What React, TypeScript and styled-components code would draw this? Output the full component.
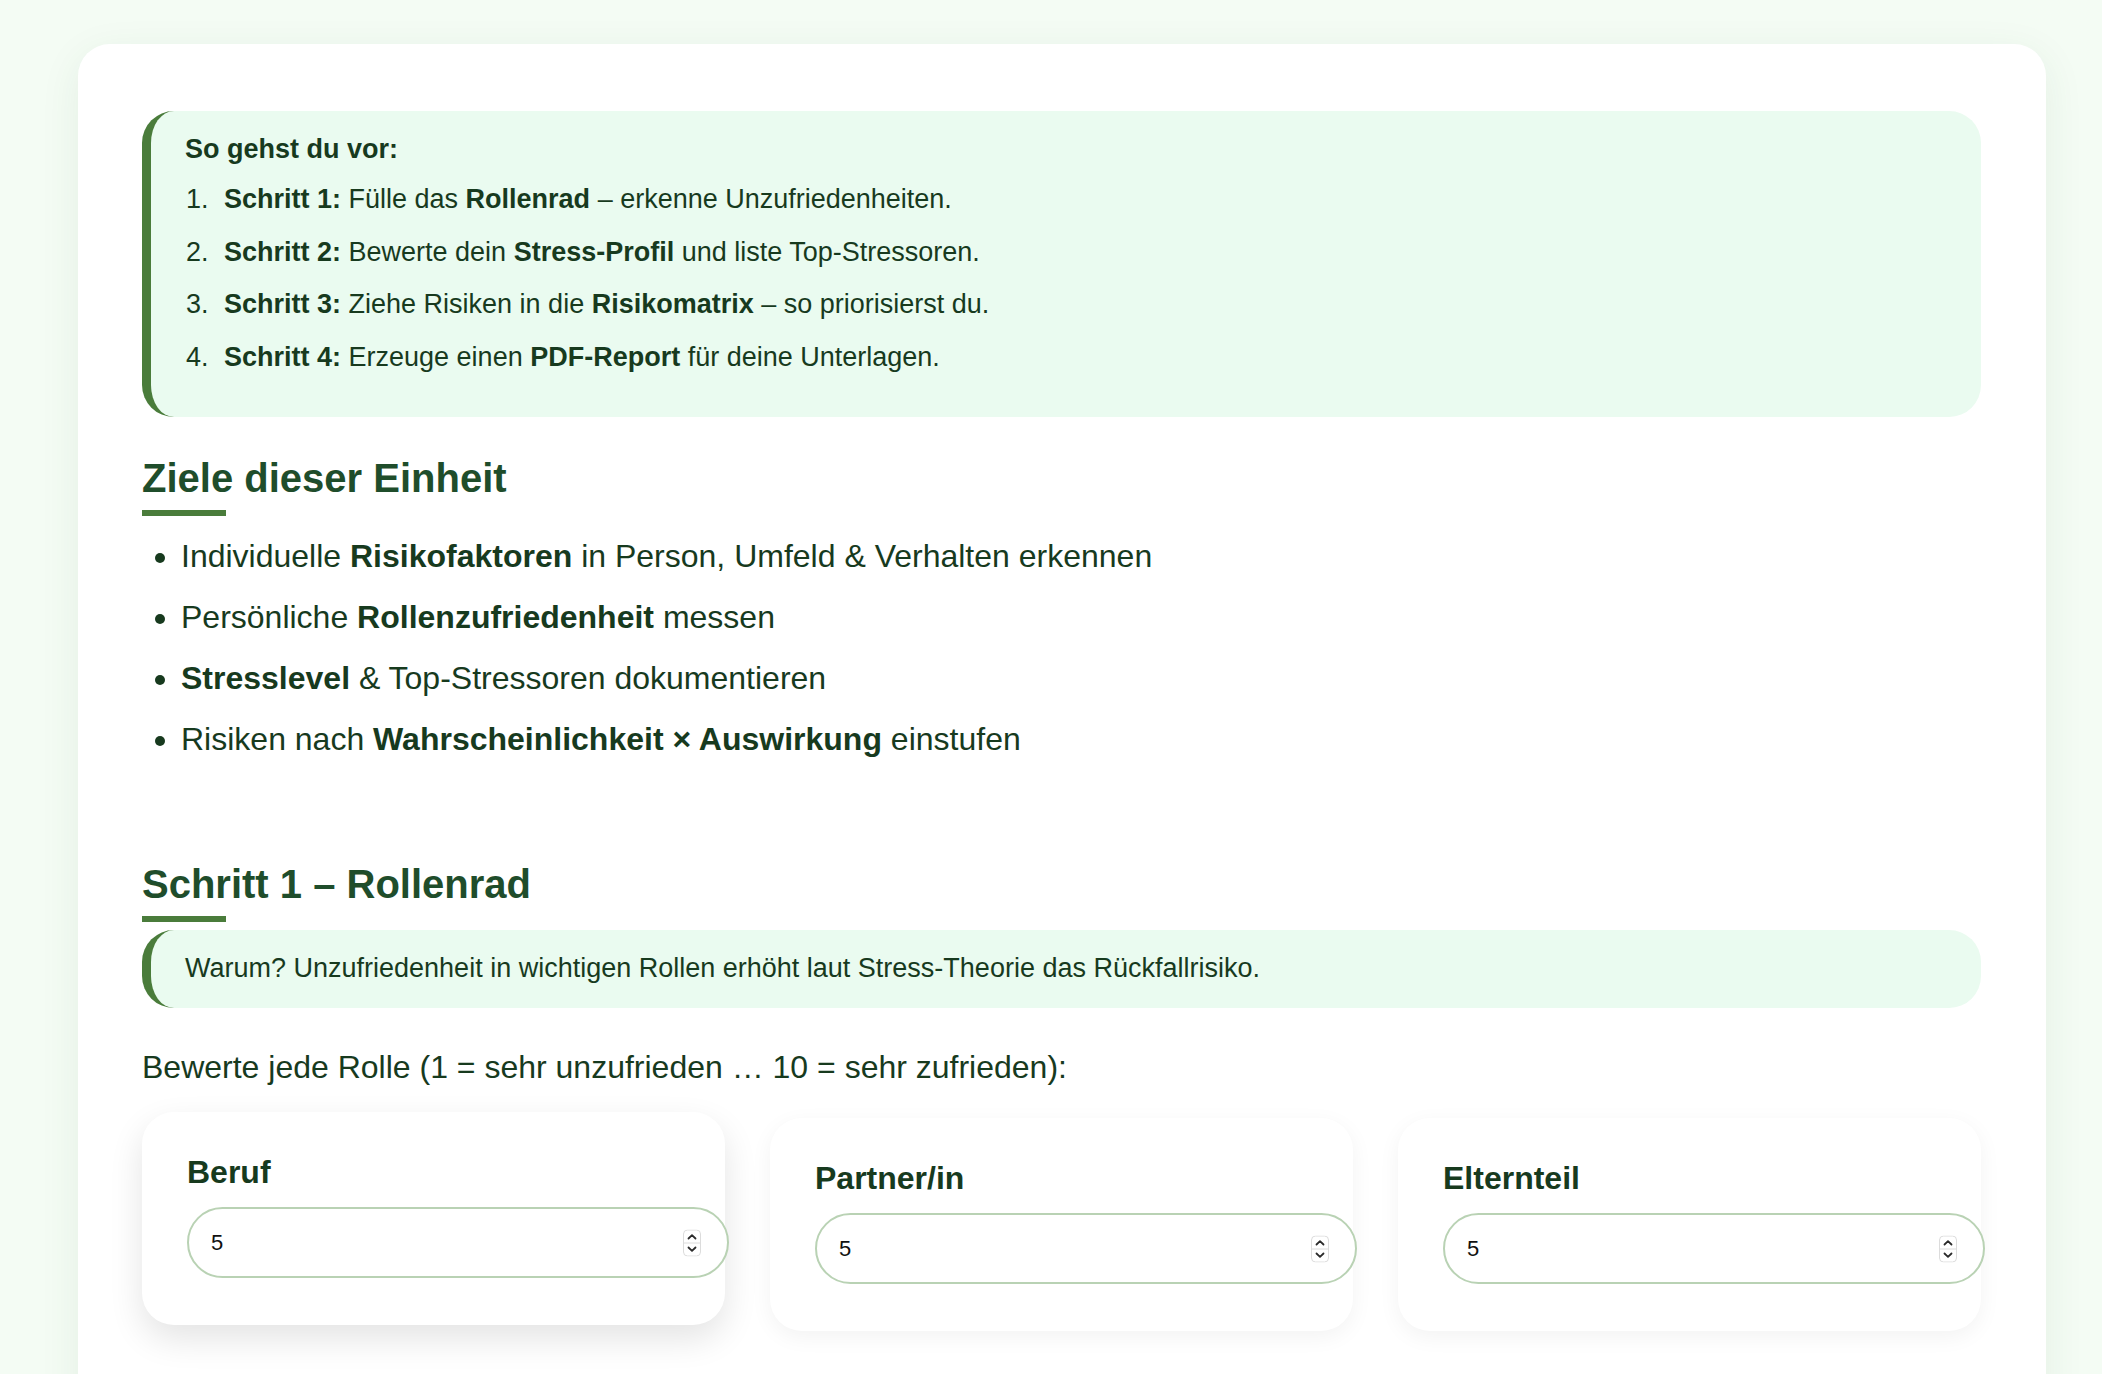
import styled, { createGlobalStyle } from 'styled-components';

const GlobalStyle = createGlobalStyle`
  html, body {
    margin: 0;
    padding: 0;
    background: #f4fcf4;
    font-family: "Liberation Sans", Arial, sans-serif;
    color: #173a1e;
  }
  * {
    -webkit-font-smoothing: antialiased;
  }
`;

const Page = styled.main`
  padding: 44px 56px 0 78px;
`;

const Card = styled.section`
  background: #ffffff;
  border-radius: 32px 32px 0 0;
  padding: 67px 65px 120px 64px;
  box-shadow: 0 10px 40px rgba(40, 90, 50, 0.08);
`;

const InfoBox = styled.div<{ $bottom?: number }>`
  background: #eafbf0;
  border-left: 9px solid #4a7c3b;
  border-radius: 32px;
  padding: 17px 34px ${(p) => p.$bottom ?? 18}px 34px;
  font-size: 27px;
  line-height: 43px;
  color: #173a1e;
`;

const InfoTitle = styled.div`
  font-weight: 700;
`;

const Steps = styled.ol`
  margin: 7px 0 0;
  padding: 0;
  list-style: none;
  counter-reset: step;

  li {
    counter-increment: step;
  }

  li::before {
    content: counter(step) '.';
    display: inline-block;
    width: 38px;
    padding-left: 1px;
  }

  li + li {
    margin-top: 9.7px;
  }
`;

const Heading = styled.h2<{ $top: number }>`
  margin: ${(p) => p.$top}px 0 0;
  font-size: 40px;
  line-height: 48px;
  font-weight: 700;
  color: #1f4d2b;

  &::after {
    content: '';
    display: block;
    width: 84px;
    height: 6px;
    margin-top: 8px;
    background: #4a7c3b;
  }
`;

const Goals = styled.ul`
  margin: 16px 0 0;
  padding-left: 39px;
  font-size: 32px;
  line-height: 48px;

  li + li {
    margin-top: 13px;
  }
`;

const Lead = styled.p`
  margin: 35px 0 0;
  font-size: 32px;
  line-height: 48px;
`;

const RoleGrid = styled.div`
  display: grid;
  grid-template-columns: repeat(3, 1fr);
  gap: 45px;
  margin-top: 27px;
`;

const RoleCard = styled.div<{ $raised?: boolean }>`
  background: #ffffff;
  border-radius: 32px;
  padding: 41px 45px 47px;
  box-shadow: ${(p) =>
    p.$raised ? '0 14px 34px rgba(0, 0, 0, 0.11)' : '0 6px 22px rgba(0, 0, 0, 0.05)'};
  transform: ${(p) => (p.$raised ? 'translateY(-6px)' : 'none')};
`;

const RoleTitle = styled.h4`
  margin: 0 0 16px;
  font-size: 32px;
  line-height: 38.4px;
  font-weight: 700;
  color: #173a1e;
`;

const InputWrap = styled.div`
  position: relative;
  width: calc(100% + 49px);
`;

const NumberInput = styled.input`
  box-sizing: border-box;
  width: 100%;
  height: 71px;
  padding: 0 60px 0 22px;
  border: 2px solid #b9d2b4;
  border-radius: 36px;
  background: #ffffff;
  font-family: "Liberation Sans", Arial, sans-serif;
  font-size: 22px;
  color: #111111;
  outline: none;
  -moz-appearance: textfield;

  &::-webkit-inner-spin-button,
  &::-webkit-outer-spin-button {
    -webkit-appearance: none;
    margin: 0;
  }
`;

const Spinner = styled.span`
  position: absolute;
  right: 28px;
  top: 50%;
  width: 18px;
  height: 27px;
  transform: translateY(-50%);
  pointer-events: none;
`;

const SpinIcon = () => (
  <svg width="18" height="27" viewBox="0 0 18 27">
    <rect x="0.5" y="0.5" width="17" height="26" rx="4" fill="#fff" stroke="#dcdcdc" />
    <line x1="1" y1="13.5" x2="17" y2="13.5" stroke="#dcdcdc" />
    <path d="M5.5 9 L9 5.6 L12.5 9" fill="none" stroke="#2b2b2b" strokeWidth="1.8" strokeLinecap="round" strokeLinejoin="round" />
    <path d="M5.5 18 L9 21.4 L12.5 18" fill="none" stroke="#2b2b2b" strokeWidth="1.8" strokeLinecap="round" strokeLinejoin="round" />
  </svg>
);

const roles = ['Beruf', 'Partner/in', 'Elternteil'];

export default function App() {
  return (
    <>
      <GlobalStyle />
      <Page>
        <Card>
          <InfoBox $bottom={38}>
            <InfoTitle>So gehst du vor:</InfoTitle>
            <Steps>
              <li>
                <strong>Schritt 1:</strong> Fülle das <strong>Rollenrad</strong> – erkenne Unzufriedenheiten.
              </li>
              <li>
                <strong>Schritt 2:</strong> Bewerte dein <strong>Stress-Profil</strong> und liste Top-Stressoren.
              </li>
              <li>
                <strong>Schritt 3:</strong> Ziehe Risiken in die <strong>Risikomatrix</strong> – so priorisierst du.
              </li>
              <li>
                <strong>Schritt 4:</strong> Erzeuge einen <strong>PDF-Report</strong> für deine Unterlagen.
              </li>
            </Steps>
          </InfoBox>

          <Heading $top={37}>Ziele dieser Einheit</Heading>
          <Goals>
            <li>
              Individuelle <strong>Risikofaktoren</strong> in Person, Umfeld &amp; Verhalten erkennen
            </li>
            <li>
              Persönliche <strong>Rollenzufriedenheit</strong> messen
            </li>
            <li>
              <strong>Stresslevel</strong> &amp; Top-Stressoren dokumentieren
            </li>
            <li>
              Risiken nach <strong>Wahrscheinlichkeit × Auswirkung</strong> einstufen
            </li>
          </Goals>

          <Heading $top={97}>Schritt 1 – Rollenrad</Heading>
          <InfoBox style={{ marginTop: 8 }}>
            Warum? Unzufriedenheit in wichtigen Rollen erhöht laut Stress-Theorie das Rückfallrisiko.
          </InfoBox>

          <Lead>Bewerte jede Rolle (1 = sehr unzufrieden … 10 = sehr zufrieden):</Lead>

          <RoleGrid>
            {roles.map((r, i) => (
              <RoleCard key={r} $raised={i === 0}>
                <RoleTitle>{r}</RoleTitle>
                <InputWrap>
                  <NumberInput type="number" min={1} max={10} defaultValue={5} />
                  <Spinner>
                    <SpinIcon />
                  </Spinner>
                </InputWrap>
              </RoleCard>
            ))}
          </RoleGrid>
        </Card>
      </Page>
    </>
  );
}
